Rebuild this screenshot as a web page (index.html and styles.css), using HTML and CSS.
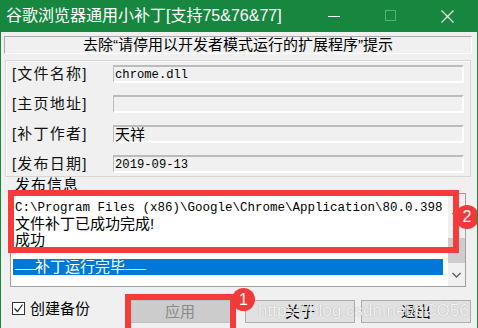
FILE: index.html
```html
<!DOCTYPE html>
<html lang="zh-CN">
<head>
    <meta charset="UTF-8">
    <title>谷歌浏览器通用小补丁</title>
    <link rel="stylesheet" href="styles.css">
</head>
<body>
    <div class="window">
        <div class="titlebar">
            <div class="title">谷歌浏览器通用小补丁[支持75&amp;76&amp;77]</div>
            <div class="ctrl">
                <svg width="12" height="12" viewBox="0 0 12 12"><path d="M0 6.5h12" stroke="#fff" stroke-width="1"/></svg>
            </div>
            <div class="ctrl">
                <svg width="12" height="12" viewBox="0 0 12 12"><rect x="0.5" y="0.5" width="10" height="10" fill="none" stroke="#5cad78" stroke-width="1"/></svg>
            </div>
            <div class="ctrl">
                <svg width="13" height="13" viewBox="0 0 13 13"><path d="M0.5 0.5l12 12M12.5 0.5l-12 12" stroke="#fff" stroke-width="1.1"/></svg>
            </div>
        </div>

        <div class="banner">去除“请停用以开发者模式运行的扩展程序”提示</div>

        <div class="group">
            <div class="label">[文件名称]</div>
            <div class="field mono">chrome.dll</div>
            <div class="label">[主页地址]</div>
            <div class="field"></div>
            <div class="label">[补丁作者]</div>
            <div class="field">天祥</div>
            <div class="label">[发布日期]</div>
            <div class="field mono">2019-09-13</div>
        </div>

        <div class="info-label">发布信息</div>
        <div class="info">
            <div class="lines">
                <div class="line mono">C:\Program Files (x86)\Google\Chrome\Application\80.0.398</div>
                <div class="line">文件补丁已成功完成!</div>
                <div class="line">成功</div>
                <div class="line selected"><span class="dash">——</span>补丁运行完毕<span class="dash">——</span></div>
            </div>
            <div class="scrollbar">
                <div class="arrow up">
                    <svg width="9" height="6" viewBox="0 0 9 6"><path d="M0.5 5l4-4 4 4" fill="none" stroke="#606060" stroke-width="1.4"/></svg>
                </div>
                <div class="thumb"></div>
                <div class="track"></div>
                <div class="arrow down">
                    <svg width="9" height="6" viewBox="0 0 9 6"><path d="M0.5 1l4 4 4-4" fill="none" stroke="#606060" stroke-width="1.4"/></svg>
                </div>
            </div>
        </div>

        <div class="footer">
            <div class="check">
                <span class="box">
                    <svg width="11" height="11" viewBox="0 0 11 11"><path d="M1.5 5.5l3 3 5-7" fill="none" stroke="#222" stroke-width="1.2"/></svg>
                </span>
                <span>创建备份</span>
            </div>
            <div class="btn disabled">应用</div>
            <div class="btn about">关于</div>
            <div class="btn exit">退出</div>
        </div>

        <!-- 标注 -->
        <div class="mark mark-log"></div>
        <div class="badge badge-log">2</div>
        <div class="mark mark-apply"></div>
        <div class="badge badge-apply">1</div>
        <div class="watermark">https://blog.csdn.net/qCO56</div>
    </div>
</body>
</html>
```

FILE: styles.css
```css
body {
    margin: 0;
    font-family: "Liberation Sans", "Noto Sans CJK SC", sans-serif;
    color: #000;
}

.window {
    position: relative;
    width: 478px;
    height: 328px;
    box-sizing: border-box;
    background-color: #f0f0f0;
    border-left: 1px solid #17873f;
    border-right: 1px solid #17873f;
    overflow: hidden;
}

.titlebar {
    display: flex;
    align-items: center;
    height: 32px;
    margin: 0 -1px;
    padding-right: 2px;
    background-color: #17873f;
    color: #fff;
}

.title {
    flex: 1;
    padding-left: 6px;
    font-size: 16px;
    line-height: 20px;
    white-space: nowrap;
}

.ctrl {
    display: flex;
    align-items: center;
    justify-content: center;
    width: 57px;
    height: 32px;
}

.banner {
    height: 18px;
    margin: 4px 5px 0 3px;
    box-sizing: border-box;
    border: 1px solid #a9a9a9;
    border-right-color: #fff;
    border-bottom-color: #fff;
    font-size: 15px;
    line-height: 16px;
    text-align: center;
}

.group {
    display: grid;
    grid-template-columns: 101px 351px;
    grid-auto-rows: 18px;
    row-gap: 12px;
    height: 117px;
    margin: 6px 6px 0 4px;
    padding: 4px 6px 0 6px;
    box-sizing: border-box;
    border: 1px solid #d6d6d6;
    box-shadow: inset 1px 1px #fff;
}

.label {
    font-size: 15px;
    line-height: 18px;
    letter-spacing: 1.2px;
    color: #111;
    white-space: nowrap;
}

.field {
    box-sizing: border-box;
    border-top: 2px solid #bcbcbc;
    border-left: 1px solid #bcbcbc;
    border-right: 2px solid #fff;
    border-bottom: 2px solid #fff;
    padding-left: 1px;
    font-size: 15px;
    line-height: 15px;
    white-space: nowrap;
}

.mono {
    font-family: "Liberation Mono", "Noto Sans CJK SC", monospace;
    font-size: 12.2px;
}

.field.mono {
    line-height: 16px;
}

.info-label {
    height: 16px;
    margin-left: 14px;
    font-size: 15px;
    line-height: 16px;
    letter-spacing: 1px;
}

.info {
    display: flex;
    width: 456px;
    height: 94px;
    margin-left: 9px;
    box-sizing: border-box;
    border: 1px solid #a0a0a0;
    background-color: #fff;
}

.lines {
    flex: 1;
    padding-top: 6px;
}

.line {
    height: 16px;
    padding-left: 4px;
    font-size: 15px;
    line-height: 16px;
    white-space: nowrap;
}

.line.mono {
    font-size: 12.5px;
}

.line.selected {
    margin: 11px 5px 0 2px;
    padding-left: 2px;
    background-color: #0078d7;
    color: #fff;
}

.dash {
    font-size: 11px;
    letter-spacing: -1px;
}

.scrollbar {
    display: flex;
    flex-direction: column;
    width: 17px;
    background-color: #f0f0f0;
}

.arrow {
    display: flex;
    align-items: center;
    justify-content: center;
}

.arrow.up {
    height: 36px;
}

.arrow.down {
    height: 17px;
    margin-bottom: 3px;
}

.thumb {
    height: 25px;
    margin-top: 8px;
    background-color: #cdcdcd;
}

.track {
    flex: 1;
}

.footer {
    display: flex;
    align-items: flex-start;
    padding-top: 13px;
}

.check {
    display: flex;
    align-items: center;
    width: 114px;
    margin-left: 11px;
    margin-top: 1px;
    font-size: 15px;
    line-height: 15px;
}

.box {
    display: flex;
    align-items: center;
    justify-content: center;
    width: 13px;
    height: 13px;
    margin-right: 5px;
    box-sizing: border-box;
    border: 1px solid #333;
    background-color: #fff;
}

.btn {
    width: 110px;
    height: 23px;
    box-sizing: border-box;
    border: 1px solid #adadad;
    background-color: #e1e1e1;
    font-size: 15px;
    line-height: 21px;
    text-align: center;
}

.btn.disabled {
    width: 108px;
    border-color: #bfbfbf;
    background-color: #cccccc;
    color: #8a8a8a;
}

.btn.about {
    margin-left: 11px;
}

.btn.exit {
    margin-left: 6px;
}

.mark {
    position: absolute;
    box-sizing: border-box;
    border: 6px solid #f73b3b;
}

.mark-log {
    left: 7px;
    top: 190px;
    width: 451px;
    height: 63px;
}

.mark-apply {
    left: 124px;
    top: 294px;
    width: 111px;
    height: 42px;
}

.badge {
    position: absolute;
    width: 24px;
    height: 24px;
    border-radius: 50%;
    background-color: #f03a3a;
    color: #fff;
    font-size: 16px;
    line-height: 24px;
    text-align: center;
}

.badge-log {
    left: 454px;
    top: 205px;
}

.badge-apply {
    left: 231px;
    top: 288px;
    width: 23px;
    height: 23px;
    line-height: 23px;
}

.watermark {
    position: absolute;
    left: 257px;
    top: 301px;
    font-size: 17px;
    line-height: 20px;
    color: rgba(255, 255, 255, 0.85);
    text-shadow: 0 0 1px rgba(110, 110, 110, 0.6);
    white-space: nowrap;
}
```
